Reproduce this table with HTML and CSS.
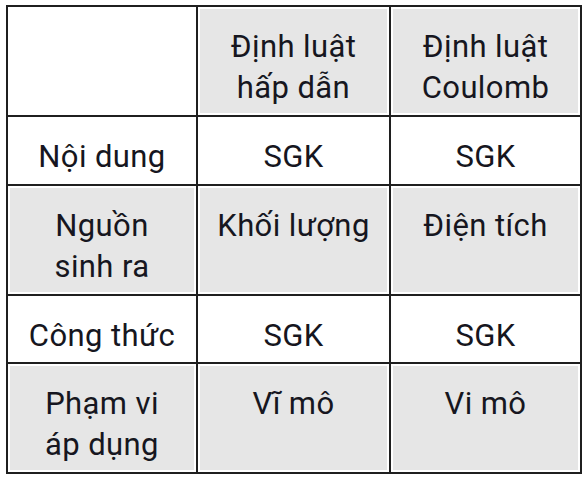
FILE: index.html
```html
<!DOCTYPE html>
<html lang="vi">
<head>
<meta charset="utf-8">
<title>So sánh định luật</title>
<link rel="stylesheet" href="styles.css">
</head>
<body>
<div class="table">
  <div class="cell"></div>
  <div class="cell grey">Định luật<br>hấp dẫn</div>
  <div class="cell grey">Định luật<br>Coulomb</div>

  <div class="cell">Nội dung</div>
  <div class="cell">SGK</div>
  <div class="cell">SGK</div>

  <div class="cell grey">Nguồn<br>sinh ra</div>
  <div class="cell grey">Khối lượng</div>
  <div class="cell grey">Điện tích</div>

  <div class="cell">Công thức</div>
  <div class="cell">SGK</div>
  <div class="cell">SGK</div>

  <div class="cell grey">Phạm vi<br>áp dụng</div>
  <div class="cell grey">Vĩ mô</div>
  <div class="cell grey">Vi mô</div>
</div>
</body>
</html>
```
FILE: styles.css
```css
html, body {
  margin: 0;
  padding: 0;
  background: #ffffff;
}
body {
  padding: 5px 0 0 6px;
  font-family: Roboto, "Liberation Sans", sans-serif;
  color: #161620;
}
.table {
  display: grid;
  grid-template-columns: 188px 191px 189px;
  grid-template-rows: 108px 67px 108px 66px 108px;
  gap: 2px;
  padding: 2px;
  width: max-content;
  background: #1f1f1f;
}
.cell {
  background: #ffffff;
  box-shadow: inset 0 0 0 2px #ffffff;
  text-align: center;
  font-size: 31px;
  line-height: 41px;
  letter-spacing: 0.4px;
  padding: 19px 4px 0;
  overflow: hidden;
}
.grey {
  background: #e6e6e6;
}
```
